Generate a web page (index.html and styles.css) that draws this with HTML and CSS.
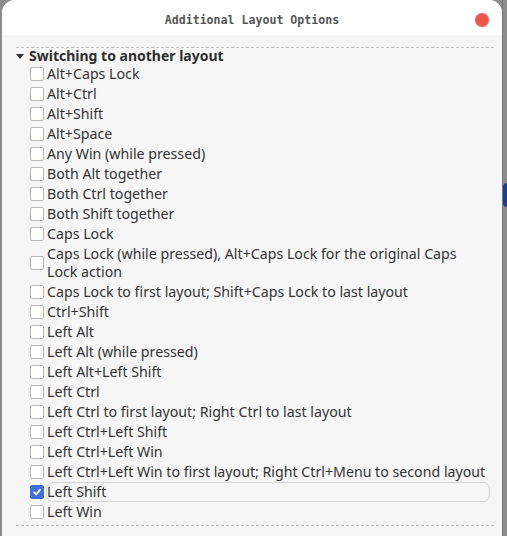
FILE: index.html
```html
<!DOCTYPE html>
<html lang="en">
<head>
    <meta charset="UTF-8">
    <meta name="viewport" content="width=device-width, initial-scale=1.0">
    <title>Additional Layout Options</title>
    <link rel="stylesheet" href="styles.css">
</head>
<body>
    <div class="window">
        <div class="titlebar">
            <span></span>
            <div class="title">Additional Layout Options</div>
            <span class="close"></span>
        </div>
        <div class="content">
            <div class="group">
                <span class="arrow"></span>
                Switching to another layout
            </div>
            <div class="options">
                <label class="option"><span class="box"></span><span class="text">Alt+Caps Lock</span></label>
                <label class="option"><span class="box"></span><span class="text">Alt+Ctrl</span></label>
                <label class="option"><span class="box"></span><span class="text">Alt+Shift</span></label>
                <label class="option"><span class="box"></span><span class="text">Alt+Space</span></label>
                <label class="option"><span class="box"></span><span class="text">Any Win (while pressed)</span></label>
                <label class="option"><span class="box"></span><span class="text">Both Alt together</span></label>
                <label class="option"><span class="box"></span><span class="text">Both Ctrl together</span></label>
                <label class="option"><span class="box"></span><span class="text">Both Shift together</span></label>
                <label class="option"><span class="box"></span><span class="text">Caps Lock</span></label>
                <label class="option wrap"><span class="box"></span><span class="text">Caps Lock (while pressed), Alt+Caps Lock for the original Caps Lock action</span></label>
                <label class="option"><span class="box"></span><span class="text">Caps Lock to first layout; Shift+Caps Lock to last layout</span></label>
                <label class="option"><span class="box"></span><span class="text">Ctrl+Shift</span></label>
                <label class="option"><span class="box"></span><span class="text">Left Alt</span></label>
                <label class="option"><span class="box"></span><span class="text">Left Alt (while pressed)</span></label>
                <label class="option"><span class="box"></span><span class="text">Left Alt+Left Shift</span></label>
                <label class="option"><span class="box"></span><span class="text">Left Ctrl</span></label>
                <label class="option"><span class="box"></span><span class="text">Left Ctrl to first layout; Right Ctrl to last layout</span></label>
                <label class="option"><span class="box"></span><span class="text">Left Ctrl+Left Shift</span></label>
                <label class="option"><span class="box"></span><span class="text">Left Ctrl+Left Win</span></label>
                <label class="option"><span class="box"></span><span class="text">Left Ctrl+Left Win to first layout; Right Ctrl+Menu to second layout</span></label>
                <label class="option checked"><span class="box"><svg width="10" height="10" viewBox="0 0 10 10"><path d="M2 5.2 L4.2 7.3 L8 2.8" fill="none" stroke="#fff" stroke-width="1.8" stroke-linecap="round" stroke-linejoin="round"/></svg></span><span class="text">Left Shift</span></label>
                <label class="option"><span class="box"></span><span class="text">Left Win</span></label>
            </div>
            <div class="bottom-line"></div>
        </div>
    </div>
    <div class="backdrop">
        <span class="blob"></span>
    </div>
</body>
</html>
```

FILE: styles.css
```css
body {
    margin: 0;
    height: 536px;
    overflow: hidden;
    background-color: #8d8d8d;
    display: flex;
    font-family: "Noto Sans", sans-serif;
}
.window {
    margin-left: 2px;
    width: 500px;
    flex-shrink: 0;
    background: #f6f6f6;
    border-radius: 13px 13px 0 0;
    overflow: hidden;
}
.titlebar {
    height: 35px;
    background: #ffffff;
    display: grid;
    grid-template-columns: 1fr auto 1fr;
    align-items: center;
}
.title {
    font-family: "DejaVu Sans Mono", monospace;
    font-weight: bold;
    font-size: 11.6px;
    color: #555555;
    padding-top: 5px;
}
.close {
    justify-self: end;
    margin-right: 13px;
    margin-top: 5px;
    width: 14px;
    height: 14px;
    border-radius: 50%;
    background: #f0574a;
}
.content {
    margin: 12px 8px 0 14px;
    border-top: 1px dashed #c3c3c3;
}
.group {
    display: flex;
    align-items: center;
    height: 16px;
    line-height: 16px;
    font-weight: bold;
    font-size: 14px;
    color: #2e2e2e;
}
.arrow {
    width: 0;
    height: 0;
    margin: 0 5px 0 0;
    border-left: 4px solid transparent;
    border-right: 4px solid transparent;
    border-top: 5px solid #333;
}
.options {
    padding-left: 14px;
}
.option {
    display: flex;
    align-items: center;
    padding: 1px 0;
    font-size: 14.2px;
    line-height: 18px;
    color: #333333;
}
.box {
    flex-shrink: 0;
    width: 12px;
    height: 12px;
    border: 1px solid #b8b8b8;
    border-radius: 2px;
    background: #ffffff;
    margin-right: 3px;
    display: flex;
    align-items: center;
    justify-content: center;
}
.text {
    flex: 1;
    border: 1px solid transparent;
    border-radius: 7px;
    margin: -1px 0 -1px -1px;
}
.wrap .text {
    flex: none;
    max-width: 425px;
}
.checked .box {
    background: #3e6fd9;
    border-color: #3e6fd9;
}
.checked .text {
    border-color: #d4d4d4;
    margin-right: 4px;
}
.bottom-line {
    margin-top: 3px;
    border-top: 1px dashed #c3c3c3;
    height: 20px;
}
.backdrop {
    flex: 1;
    border-left: 1px solid #777;
}
.blob {
    display: block;
    margin-top: 183px;
    height: 24px;
    background: #1d3f8f;
    border-radius: 12px 0 0 12px;
}
```
